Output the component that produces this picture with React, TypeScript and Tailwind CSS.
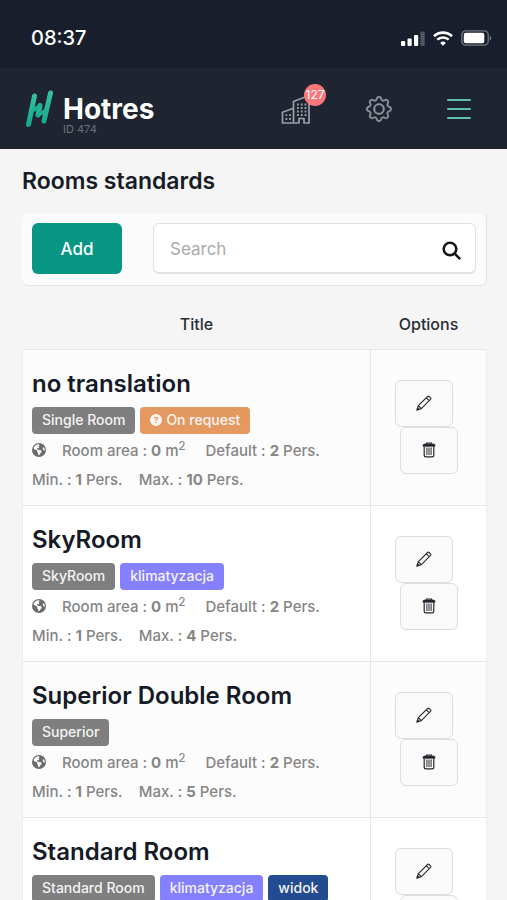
import React from "react";
import { FaEarthAmericas, FaCircleQuestion } from "react-icons/fa6";

type Tag = { label: string; tone: string; question?: boolean };
type Room = { name: string; tags: Tag[]; area: number; standard: number; min: number; max: number };

const GREY = "bg-[#7f7f7f]";
const ORANGE = "bg-[#e3995f]";
const VIOLET = "bg-[#8480ff]";
const NAVY = "bg-[#234b90]";

const rooms: Room[] = [
  {
    name: "no translation",
    tags: [
      { label: "Single Room", tone: GREY },
      { label: "On request", tone: ORANGE, question: true },
    ],
    area: 0, standard: 2, min: 1, max: 10,
  },
  {
    name: "SkyRoom",
    tags: [
      { label: "SkyRoom", tone: GREY },
      { label: "klimatyzacja", tone: VIOLET },
    ],
    area: 0, standard: 2, min: 1, max: 4,
  },
  {
    name: "Superior Double Room",
    tags: [{ label: "Superior", tone: GREY }],
    area: 0, standard: 2, min: 1, max: 5,
  },
  {
    name: "Standard Room",
    tags: [
      { label: "Standard Room", tone: GREY },
      { label: "klimatyzacja", tone: VIOLET },
      { label: "widok", tone: NAVY },
    ],
    area: 0, standard: 2, min: 1, max: 4,
  },
];

function StatusBar() {
  return (
    <div className="flex h-17 items-center justify-between bg-[#191e2d] pt-2 pr-[15px] pl-[31px] text-white">
      <span className="text-xl leading-6 font-medium">08:37</span>
      <div className="flex items-center gap-2">
        <svg width="24" height="15" viewBox="0 0 24 15" fill="currentColor" aria-hidden="true">
          <rect x="0" y="10" width="4.2" height="5" rx="1" />
          <rect x="6.5" y="7.5" width="4.2" height="7.5" rx="1" />
          <rect x="13" y="4" width="4.2" height="11" rx="1" />
          <rect x="19.5" y="0.5" width="4.2" height="14.5" rx="1" opacity="0.25" />
        </svg>
        <svg width="20" height="15" viewBox="0 0 20 15" fill="none" stroke="currentColor" aria-hidden="true">
          <path d="M1 5.2a13 13 0 0 1 18 0" strokeWidth="2.6" />
          <path d="M4.3 8.7a8.2 8.2 0 0 1 11.4 0" strokeWidth="2.5" />
          <path d="M10 14.8l-2.8-2.9a4 4 0 0 1 5.6 0z" fill="currentColor" stroke="none" />
        </svg>
        <svg width="31" height="16" viewBox="0 0 31 16" aria-hidden="true">
          <rect x="0.8" y="0.8" width="26.4" height="14.4" rx="4" fill="none" stroke="#777a83" strokeWidth="1.3" />
          <rect x="2.8" y="2.8" width="20.5" height="10.4" rx="2" fill="currentColor" />
          <path d="M28.7 5.4v5.2c2-.8 2-4.4 0-5.2z" fill="#777a83" />
        </svg>
      </div>
    </div>
  );
}

function Logo() {
  return (
    <svg width="29" height="38" viewBox="0 0 29 38" fill="none" strokeLinecap="round" aria-hidden="true">
      <defs>
        <linearGradient id="leaf" x1="0" y1="0" x2="0" y2="38" gradientUnits="userSpaceOnUse">
          <stop offset="0" stopColor="#3cc0a5" />
          <stop offset="1" stopColor="#12a88e" />
        </linearGradient>
      </defs>
      <g stroke="url(#leaf)" strokeWidth="5">
        <path d="M10.5 6L4.500 34.500" />
        <path d="M16 15.500L14 25" />
        <path d="M26.500 3L20 31" />
      </g>
      <path d="M9 20.500L16 15.500M14 25.500L21.500 20.500" stroke="#1fae94" strokeWidth="3.500" />
    </svg>
  );
}

function HotelIcon() {
  return (
    <svg width="30" height="30" viewBox="0 0 30 30" fill="none" stroke="#9aa0a8" strokeWidth="1.7" strokeLinejoin="round" aria-hidden="true">
      <path d="M12.5 29H1.500V18.200l11-4V29zM12.500 14V7.500L28 1.500V29h-5v-4.500h-5V29h-5.500" />
      <path d="M4.500 21.200h6M4.500 25h6" strokeDasharray="1.8 1.8" strokeWidth="1.8" />
      <path d="M16 10.500h9.500M16 14h9.500M16 17.500h9.500M16 21h9.500" strokeDasharray="1.800 2" strokeWidth="1.800" />
    </svg>
  );
}

function GearIcon() {
  return (
    <svg width="28" height="28" viewBox="0 0 16 16" fill="#90969f" stroke="#90969f" strokeWidth="0.15" aria-hidden="true">
      <path d="M8 4.754a3.246 3.246 0 1 0 0 6.492 3.246 3.246 0 0 0 0-6.492zM5.754 8a2.246 2.246 0 1 1 4.492 0 2.246 2.246 0 0 1-4.492 0z" />
      <path
        transform="translate(8 8) scale(.92) translate(-8 -8)"
        d="M9.796 1.343c-.527-1.79-3.065-1.79-3.592 0l-.094.319a.873.873 0 0 1-1.255.52l-.292-.16c-1.64-.892-3.433.902-2.54 2.541l.159.292a.873.873 0 0 1-.52 1.255l-.319.094c-1.79.527-1.79 3.065 0 3.592l.319.094a.873.873 0 0 1 .52 1.255l-.16.292c-.892 1.64.901 3.434 2.541 2.54l.292-.159a.873.873 0 0 1 1.255.52l.094.319c.527 1.79 3.065 1.79 3.592 0l.094-.319a.873.873 0 0 1 1.255-.52l.292.16c1.64.893 3.434-.902 2.54-2.541l-.159-.292a.873.873 0 0 1 .52-1.255l.319-.094c1.79-.527 1.79-3.065 0-3.592l-.319-.094a.873.873 0 0 1-.52-1.255l.16-.292c.893-1.64-.902-3.433-2.541-2.54l-.292.159a.873.873 0 0 1-1.255-.52l-.094-.319zm-2.633.283c.246-.835 1.428-.835 1.674 0l.094.319a1.873 1.873 0 0 0 2.693 1.115l.291-.16c.764-.415 1.6.42 1.184 1.185l-.159.292a1.873 1.873 0 0 0 1.116 2.692l.318.094c.835.246.835 1.428 0 1.674l-.319.094a1.873 1.873 0 0 0-1.115 2.693l.16.291c.415.764-.42 1.6-1.185 1.184l-.291-.159a1.873 1.873 0 0 0-2.693 1.116l-.094.318c-.246.835-1.428.835-1.674 0l-.094-.319a1.873 1.873 0 0 0-2.692-1.115l-.292.16c-.764.415-1.6-.42-1.184-1.185l.159-.291A1.873 1.873 0 0 0 1.945 8.93l-.319-.094c-.835-.246-.835-1.428 0-1.674l.319-.094A1.873 1.873 0 0 0 3.06 4.377l-.16-.292c-.415-.764.42-1.6 1.185-1.184l.292.159a1.873 1.873 0 0 0 2.692-1.115l.094-.319z"
      />
    </svg>
  );
}

function PencilIcon() {
  return (
    <svg width="16" height="16" viewBox="0 0 16 16" fill="none" stroke="#2b2d33" strokeWidth="1.1" strokeLinejoin="round" aria-hidden="true">
      <path d="M1 15l1.300-4.400 9.300-9.100c.5-.5 1-.5 1.500 0l1.400 1.400c.5.5.5 1 0 1.500L5.300 13.700zM2.300 10.600l3 3.100M10.300 2.800l2.900 2.900" />
      <path d="M1 15l.6-2.200 1.700 1.500z" fill="#2b2d33" />
    </svg>
  );
}

function TrashIcon() {
  return (
    <svg width="14" height="16" viewBox="0 0 14 16" fill="none" stroke="#24262d" aria-hidden="true">
      <path d="M4.700 2V1h4.600v1" strokeWidth="1.200" />
      <path d="M1 4.200V3.500C1 2.500 1.800 2 2.600 2h8.800c.8 0 1.600.5 1.600 1.500v.7z" fill="#24262d" strokeWidth="0.800" />
      <path d="M2.200 4.500v8.700c0 1 .7 1.700 1.600 1.700h6.400c.9 0 1.600-.7 1.600-1.700V4.500" strokeWidth="1.200" />
      <path d="M4.900 5.500v7.500M7 5.500v7.500M9.100 5.500v7.500" strokeWidth="1" />
    </svg>
  );
}

function Header() {
  return (
    <header className="flex h-[81px] items-center justify-between bg-[#1e2430] pr-9 pl-6">
      <a href="#home" className="flex items-center gap-2.5" aria-label="Hotres ID 474">
        <Logo />
        <span className="flex flex-col pt-3">
          <span className="text-[28px] leading-7 font-bold text-white">Hotres</span>
          <span className="text-[11px] leading-3 text-[#6d727c]">ID 474</span>
        </span>
      </a>
      <nav className="flex items-center gap-[54px]">
        <button type="button" aria-label="Hotel notifications" className="relative">
          <HotelIcon />
          <span className="absolute -top-2.5 left-[23px] flex size-[22px] items-center justify-center rounded-full bg-[#fb7779] text-xs leading-3 text-white">
            127
          </span>
        </button>
        <button type="button" aria-label="Settings">
          <GearIcon />
        </button>
        <button type="button" aria-label="Menu" className="flex w-6 flex-col gap-[7px]">
          <span className="h-0.5 rounded-full bg-[#5fc0b0]" />
          <span className="h-0.5 rounded-full bg-[#5fc0b0]" />
          <span className="h-0.5 rounded-full bg-[#5fc0b0]" />
        </button>
      </nav>
    </header>
  );
}

function Toolbar() {
  return (
    <form
      className="mt-4 flex items-center gap-[31px] rounded-md border-r border-b border-[#e3e3e3] bg-[#fbfbfb] px-2.5 pt-2.5 pb-[11px]"
      onSubmit={(e) => e.preventDefault()}
    >
      <button type="button" className="h-[51px] w-[90px] rounded-md bg-[#089684] pt-0.5 text-[17px] font-medium text-white">
        Add
      </button>
      <div className="flex h-[51px] min-w-0 flex-1 items-center rounded-md border border-b-2 border-[#e0e0e0] bg-white pt-1 pr-3.5 pl-4">
        <input
          type="search"
          aria-label="Search"
          placeholder="Search"
          className="min-w-0 flex-1 text-[17px] text-[#20232c] outline-none placeholder:text-[#aaaaaa]"
        />
        <button type="submit" aria-label="Run search">
          <svg width="19" height="19" viewBox="0 0 19 19" fill="none" stroke="#15171c" strokeWidth="2.600" strokeLinecap="round" aria-hidden="true">
            <circle cx="8" cy="8" r="6.300" />
            <path d="M12.700 12.700l4.700 4.700" />
          </svg>
        </button>
      </div>
    </form>
  );
}

function RoomRow({ room }: { room: Room }) {
  return (
    <tr className="h-[156px] border-t border-[#e6e6e6] odd:bg-[#fcfcfd] even:bg-white">
      <td className="border-r border-[#e6e6e6] pr-2.5 pl-[9px] pt-4 align-top">
        <h2 className="text-2xl leading-9 font-semibold text-[#151a26]">{room.name}</h2>
        <div className="mt-[5px] flex gap-[5px]">
          {room.tags.map((tag) => (
            <span
              key={tag.label}
              className={`flex h-[27px] items-center gap-1 rounded-sm px-2.5 text-sm font-medium whitespace-nowrap text-[#f4f4f4] ${tag.tone}`}
            >
              {tag.question && <FaCircleQuestion className="size-3" aria-hidden="true" />}
              {tag.label}
            </span>
          ))}
        </div>
        <div className="mt-0.5 text-[15px] leading-[29px] font-medium text-[#858585]">
          <p className="flex items-center">
            <FaEarthAmericas className="mr-4 size-3.5 text-[#6b6b6b]" aria-hidden="true" />
            <span className="mr-5">
              Room area : <b className="font-bold">{room.area}</b> m<sup>2</sup>
            </span>
            <span>
              Default : <b className="font-bold">{room.standard}</b> Pers.
            </span>
          </p>
          <p className="flex gap-4">
            <span>
              Min. : <b className="font-bold">{room.min}</b> Pers.
            </span>
            <span>
              Max. : <b className="font-bold">{room.max}</b> Pers.
            </span>
          </p>
        </div>
      </td>
      <td className="pt-[30px] align-top">
        <div className="flex flex-col items-center">
          <button
            type="button"
            aria-label={`Edit ${room.name}`}
            className="mr-2.5 flex h-[47px] w-[58px] items-center justify-center rounded-md border border-[#dddddf] bg-[#fafafb]"
          >
            <PencilIcon />
          </button>
          <button
            type="button"
            aria-label={`Delete ${room.name}`}
            className="flex h-[47px] w-[58px] items-center justify-center rounded-md border border-[#dddddf] bg-[#fafafb]"
          >
            <TrashIcon />
          </button>
        </div>
      </td>
    </tr>
  );
}

export default function App() {
  return (
    <div className="flex h-screen flex-col bg-[#f5f5f5] font-['Inter','Liberation_Sans',sans-serif]">
      <StatusBar />
      <Header />
      <main className="min-h-0 flex-1 overflow-y-auto pr-5 pl-[22px] [scrollbar-width:none]">
        <h1 className="pt-4 text-[23px] leading-8 font-semibold text-[#181c27]">Rooms standards</h1>
        <Toolbar />
        <table className="mt-[13px] w-full table-fixed border-collapse">
          <thead>
            <tr className="h-[50px] text-base text-[#2a2d34]">
              <th scope="col" className="w-3/4 font-medium">Title</th>
              <th scope="col" className="w-1/4 font-medium">Options</th>
            </tr>
          </thead>
          <tbody className="border-x border-[#eeeeee]">
            {rooms.map((room) => (
              <RoomRow key={room.name} room={room} />
            ))}
          </tbody>
        </table>
      </main>
    </div>
  );
}
